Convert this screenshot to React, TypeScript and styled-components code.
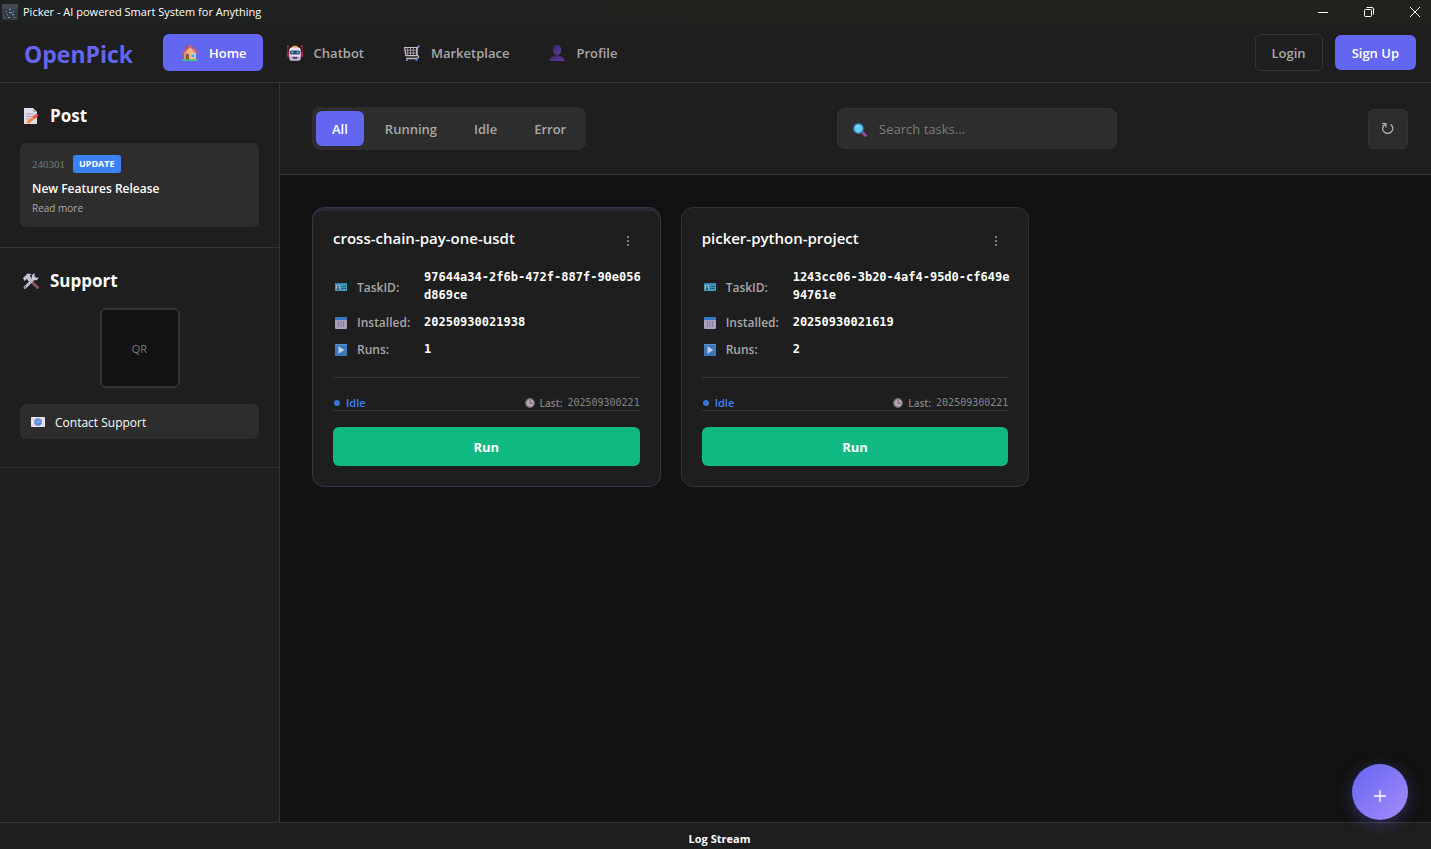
import React from "react";
import styled, { createGlobalStyle, css } from "styled-components";

const color = {
  page: "#121212",
  panel: "#1e1e1e",
  raised: "#2d2d2d",
  line: "#333333",
  accent: "#6366f1",
  text: "#ffffff",
  muted: "#a8a8a8",
  faint: "#7c7c7c",
  blue: "#3b82f6",
  green: "#10b981",
};

const GlobalStyle = createGlobalStyle`
  *, *::before, *::after { box-sizing: border-box; }
  body {
    margin: 0;
    background: ${color.page};
    color: ${color.text};
    font-family: "Open Sans", "Noto Sans", sans-serif;
    font-size: 13px;
    line-height: 19px;
  }
  button, input { font: inherit; color: inherit; margin: 0; }
  button { border: 0; background: none; cursor: pointer; }
  h1, h2, h3, h4, p, dl, dd, dt { margin: 0; }
`;

const Shell = styled.div`
  display: flex;
  flex-direction: column;
  min-height: 100vh;
`;

/* ---------- window title bar ---------- */

const TitleBar = styled.div`
  display: flex;
  align-items: center;
  height: 23px;
  padding-left: 2px;
  gap: 5px;
  background: linear-gradient(90deg, #202221, #202221 30%, #23211b 60%);
  font-size: 11px;
`;

const TitleText = styled.span`
  flex: 1;
`;

const WindowControls = styled.div`
  display: flex;
`;

const WindowButton = styled.button`
  display: flex;
  align-items: center;
  justify-content: center;
  width: 46px;
  height: 22px;
  padding: 0;
  &:last-child { width: 32px; margin-left: 7px; }
`;

/* ---------- header ---------- */

const Header = styled.header`
  display: flex;
  align-items: center;
  height: 60px;
  padding: 0 15px 0 24px;
  background: ${color.panel};
  border-bottom: 1px solid ${color.line};
`;

const Brand = styled.h1`
  width: 139px;
  padding-top: 2px;
  font-size: 23px;
  line-height: 32px;
  font-weight: 700;
  color: ${color.accent};
`;

const Nav = styled.nav`
  display: flex;
  flex: 1;
  gap: 5px;
`;

const NavItem = styled.a<{ $active?: boolean }>`
  display: flex;
  align-items: center;
  gap: 8px;
  height: 37px;
  padding: 0 16px;
  border-radius: 6px;
  line-height: 21px;
  font-weight: 600;
  text-decoration: none;
  color: ${(p) => (p.$active ? color.text : color.muted)};
  background: ${(p) => (p.$active ? color.accent : "transparent")};
`;

const NavLabel = styled.span`
  padding-top: 2px;
`;

const IconBox = styled.span<{ $w?: number }>`
  display: inline-flex;
  justify-content: center;
  align-items: center;
  flex: none;
  width: ${(p) => p.$w ?? 22}px;
`;

const AuthButtons = styled.div`
  display: flex;
  align-items: center;
  gap: 12px;
`;

const AuthButton = styled.button<{ $primary?: boolean }>`
  padding: 9px 16px 7px;
  border-radius: 6px;
  font-weight: 600;
  ${(p) =>
    p.$primary
      ? css`
          padding: 9px 17px 7px;
          background: ${color.accent};
          color: ${color.text};
        `
      : css`
          border: 1px solid ${color.line};
          color: ${color.muted};
        `}
`;

/* ---------- body ---------- */

const Body = styled.div`
  display: flex;
  flex: 1;
`;

const Sidebar = styled.aside`
  flex: none;
  width: 280px;
  background: ${color.panel};
  border-right: 1px solid ${color.line};
`;

const SideSection = styled.section`
  padding: 20px;
  border-bottom: 1px solid ${color.line};
`;

const SideHeading = styled.h2`
  display: flex;
  align-items: center;
  gap: 8px;
  margin-bottom: 14px;
  font-size: 17px;
  line-height: 26px;
  font-weight: 700;
`;

const PostCard = styled.article`
  height: 84px;
  padding: 12px;
  border-radius: 6px;
  background: ${color.raised};
`;

const PostMeta = styled.div`
  display: flex;
  align-items: center;
  gap: 8px;
  margin-bottom: 6px;
`;

const PostDate = styled.time`
  font-family: "Liberation Serif", serif;
  font-size: 11px;
  line-height: 18px;
  color: ${color.faint};
`;

const Badge = styled.span`
  padding: 0 6px;
  border-radius: 3px;
  background: ${color.blue};
  font-size: 9px;
  line-height: 18px;
  font-weight: 700;
`;

const PostTitle = styled.h3`
  font-size: 12px;
  line-height: 20px;
  font-weight: 600;
`;

const PostLink = styled.a`
  display: block;
  font-size: 10px;
  line-height: 19px;
  color: ${color.muted};
  text-decoration: none;
`;

const QrBox = styled.div`
  display: flex;
  align-items: center;
  justify-content: center;
  width: 80px;
  height: 80px;
  margin: 0 auto 16px;
  border: 2px solid ${color.line};
  border-radius: 6px;
  background: ${color.page};
  font-size: 11px;
  color: ${color.faint};
`;

const ContactButton = styled.button`
  display: flex;
  align-items: center;
  gap: 7px;
  width: 100%;
  height: 35px;
  margin-bottom: 8px;
  padding: 1px 8px 0;
  border-radius: 6px;
  background: ${color.raised};
  font-size: 12px;
`;

/* ---------- main ---------- */

const Main = styled.main`
  flex: 1;
  min-width: 0;
`;

const Toolbar = styled.div`
  display: flex;
  align-items: center;
  justify-content: space-between;
  padding: 24px 23px 24px 32px;
  background: ${color.panel};
  border-bottom: 1px solid ${color.line};
`;

const FilterGroup = styled.div`
  display: flex;
  gap: 5px;
  padding: 4px;
  border-radius: 8px;
  background: ${color.raised};
`;

const FilterButton = styled.button<{ $active?: boolean }>`
  padding: 9px 16px 7px;
  border-radius: 6px;
  font-weight: 600;
  color: ${(p) => (p.$active ? color.text : color.muted)};
  background: ${(p) => (p.$active ? color.accent : "transparent")};
`;

const SearchField = styled.label`
  display: flex;
  align-items: center;
  gap: 9px;
  width: 280px;
  height: 41px;
  padding: 2px 12px 0;
  border: 1px solid ${color.line};
  border-radius: 8px;
  background: ${color.raised};
`;

const SearchInput = styled.input`
  flex: 1;
  min-width: 0;
  padding: 0;
  border: 0;
  outline: 0;
  background: transparent;
  &::placeholder { color: ${color.faint}; opacity: 1; }
`;

const RefreshButton = styled.button`
  display: flex;
  align-items: center;
  justify-content: center;
  width: 40px;
  height: 40px;
  padding: 0;
  border: 1px solid ${color.line};
  border-radius: 6px;
  background: ${color.raised};
`;

const TaskGrid = styled.div`
  display: grid;
  grid-template-columns: repeat(auto-fill, minmax(320px, 1fr));
  gap: 20px;
  padding: 32px 33px 32px 32px;
`;

const TaskCard = styled.article<{ $highlighted?: boolean }>`
  padding: 20px;
  border: 1px solid ${(p) => (p.$highlighted ? "#37344a" : color.line)};
  border-radius: 12px;
  background: ${color.panel};
  ${(p) => p.$highlighted && css`box-shadow: inset 0 3px 0 #2b2938;`}
`;

const TaskHead = styled.div`
  display: flex;
  align-items: center;
  justify-content: space-between;
  height: 24px;
  margin-bottom: 16px;
  padding-right: 7px;
`;

const TaskName = styled.h3`
  padding-bottom: 4px;
  font-size: 15px;
  line-height: 20px;
  font-weight: 600;
`;

const MenuButton = styled.button`
  display: flex;
  padding: 1px 4px 0;
`;

const Details = styled.dl`
  padding-bottom: 11px;
  border-bottom: 1px solid ${color.line};
`;

const DetailRow = styled.div`
  display: flex;
  align-items: center;
  margin-bottom: 8px;
`;

const DetailLabel = styled.dt`
  display: flex;
  align-items: center;
  flex: none;
  gap: 8px;
  width: 91px;
  padding-top: 2px;
  font-size: 12px;
  line-height: 17px;
  font-weight: 600;
  color: ${color.muted};
`;

const DetailValue = styled.dd`
  flex: none;
  width: calc(30ch + 2px);
  font-family: "DejaVu Sans Mono", monospace;
  font-size: 12px;
  line-height: 18px;
  font-weight: 700;
  word-break: break-all;
`;

const StatusRow = styled.div`
  display: flex;
  align-items: center;
  justify-content: space-between;
  height: 33px;
  margin-bottom: 16px;
  padding-top: 17px;
  border-bottom: 1px solid ${color.line};
`;

const Status = styled.span`
  display: flex;
  align-items: center;
  gap: 6px;
  padding-left: 1px;
  font-size: 11px;
  line-height: 16px;
  font-weight: 600;
  color: ${color.blue};
  &::before {
    content: "";
    width: 6px;
    height: 6px;
    border-radius: 50%;
    background: #3973d6;
  }
`;

const LastRun = styled.span`
  display: flex;
  align-items: center;
  gap: 5px;
  font-size: 10px;
  line-height: 16px;
  color: #858585;
  font-weight: 600;
  time {
    font-family: "DejaVu Sans Mono", monospace;
    font-weight: 400;
  }
`;

const RunButton = styled.button`
  width: 100%;
  height: 39px;
  padding: 1px 0 0;
  border-radius: 6px;
  background: ${color.green};
  font-weight: 700;
`;

const AddButton = styled.button`
  position: fixed;
  right: 23px;
  bottom: 29px;
  display: flex;
  align-items: center;
  justify-content: center;
  width: 56px;
  height: 56px;
  padding: 7px 0 0;
  border-radius: 50%;
  background: linear-gradient(135deg, #6366f1, #a78bfa);
  box-shadow: 0 4px 16px rgba(99, 102, 241, 0.35);
`;

const LogBar = styled.footer`
  height: 27px;
  padding: 6px 0 0 8px;
  border-top: 1px solid ${color.line};
  background: ${color.panel};
  text-align: center;
  font-size: 11px;
  font-weight: 700;
`;

/* ---------- icons ---------- */

const AppIcon = () => (
  <svg width="16" height="16" viewBox="0 0 16 16" aria-hidden="true">
    <rect width="16" height="16" fill="#343c47" />
    <path d="M0 0h16v5H0z" fill="#434a56" />
    <g fill="#79a6ad">
      <rect x="7" y="5" width="2" height="1" /><rect x="4" y="7" width="1" height="1" />
      <rect x="7" y="8" width="3" height="1" /><rect x="11" y="7" width="1" height="1" />
      <rect x="5" y="10" width="1" height="1" /><rect x="10" y="10" width="2" height="1" />
      <rect x="2" y="13" width="1" height="1" /><rect x="6" y="13" width="2" height="1" />
      <rect x="12" y="13" width="1" height="1" />
    </g>
  </svg>
);

const MinimizeIcon = () => (
  <svg width="10" height="10" viewBox="0 0 10 10" aria-hidden="true"><path d="M0 5.5h10" stroke="#fff" /></svg>
);
const RestoreIcon = () => (
  <svg width="10" height="10" viewBox="0 0 10 10" fill="none" stroke="#fff" aria-hidden="true">
    <rect x=".5" y="2.5" width="7" height="7" rx="1" />
    <path d="M2.5 .5H8a1.5 1.5 0 0 1 1.500 1.500V7.500" />
  </svg>
);
const CloseIcon = () => (
  <svg width="10" height="10" viewBox="0 0 10 10" aria-hidden="true"><path d="M0 0l10 10M10 0L0 10" stroke="#fff" /></svg>
);

const HomeIcon = () => (
  <svg width="16" height="16" viewBox="0 0 16 16" aria-hidden="true">
    <path d="M3 1h3v5H3z" fill="#9c5a50" />
    <path d="M2 8l6-6 6 6v7H2z" fill="#f0b183" />
    <path d="M2 9l3-3v9H2z" fill="#dc9270" />
    <path d="M.7 8.500L8.500 1l7 7" fill="none" stroke="#e8604a" strokeWidth="1.600" strokeLinecap="round" />
    <rect x="4" y="9" width="3" height="6" fill="#8e5545" />
    <rect x="9" y="9" width="4" height="3.500" fill="#4fa9e8" stroke="#fce0c4" strokeWidth=".6" />
    <path d="M0 15.200h16" stroke="#36c979" strokeWidth="1.600" />
  </svg>
);

const RobotIcon = () => (
  <svg width="16" height="16" viewBox="0 0 16 16" aria-hidden="true">
    <path d="M.8 1v7M15.200 1v7" stroke="#a91f51" strokeWidth=".9" />
    <circle cx=".9" cy="1.200" r=".9" fill="#d32b5f" /><circle cx="15.100" cy="1.200" r=".9" fill="#d32b5f" />
    <rect x="0" y="7" width="2.500" height="5" rx="1" fill="#b02350" />
    <rect x="13.500" y="7" width="2.500" height="5" rx="1" fill="#b02350" />
    <path d="M5 2.500Q5 .8 6.500.8h3Q11 .8 11 2.500z" fill="#f2a51c" />
    <path d="M5.500 2.200h5q3.200 0 3.200 3.200v7.100H2.300V5.400q0-3.200 3.200-3.200z" fill="#ece2f4" />
    <path d="M2.300 11h11.400v2.500q0 2.300-2.300 2.300H4.600q-2.300 0-2.300-2.300z" fill="#cbb5dc" />
    <rect x="3" y="5.500" width="10" height="4" rx="1.500" fill="#34466a" />
    <rect x="4.300" y="6.500" width="2.200" height="2" rx=".8" fill="#55b9f4" />
    <rect x="9.500" y="6.500" width="2.200" height="2" rx=".8" fill="#55b9f4" />
    <rect x="5.500" y="12" width="5" height="1.700" rx=".4" fill="#4c4058" />
  </svg>
);

const CartIcon = () => (
  <svg width="16" height="16" viewBox="0 0 16 16" fill="none" aria-hidden="true">
    <path d="M.6 2.500h12.400v8.200H1.800z" stroke="#c9c3ce" strokeWidth="1.200" />
    <path d="M3.700 2.500v8M6.500 2.500v8M9.300 2.500v8M.8 5.200h12M1 8h12" stroke="#a9a3ae" strokeWidth=".9" />
    <path d="M15 1l-2.200 2.500v6.700q2 .5 1.800 2-.3 1.300-2 1.300H2" stroke="#bdb6c4" strokeWidth="1.300" />
    <path d="M13.700 1.700l2-1" stroke="#3484dc" strokeWidth="1.500" />
    <circle cx="3" cy="15" r="1.100" fill="#438cd8" /><circle cx="12.500" cy="15" r="1.100" fill="#438cd8" />
  </svg>
);

const PersonIcon = () => (
  <svg width="16" height="16" viewBox="0 0 16 16" aria-hidden="true">
    <defs>
      <linearGradient id="person" x1="0" y1="0" x2="1" y2="1">
        <stop offset="0" stopColor="#3b2365" /><stop offset="1" stopColor="#643b9d" />
      </linearGradient>
    </defs>
    <path d="M8 0c2.800 0 4.200 2 4.200 5S10.500 10 8 10 3.800 8 3.800 5 5.200 0 8 0z" fill="url(#person)" />
    <path d="M.5 16c0-3.500 3-5 7.500-5s7.500 1.500 7.500 5z" fill="url(#person)" />
    <path d="M6.500 9h3v3h-3z" fill="#452873" />
  </svg>
);

const MemoIcon = () => (
  <svg width="16" height="16" viewBox="0 0 16 16" aria-hidden="true">
    <path d="M1 0h9l4 4v12H1z" fill="#e4dbea" />
    <path d="M10 0l4 4h-4z" fill="#b5a6c0" />
    <path d="M3 6h8M3 8.500h7M3 11h5" stroke="#a999b5" strokeWidth=".9" />
    <path d="M4.500 14.800L12 8.700" stroke="#f98b3c" strokeWidth="3" />
    <path d="M11.700 9l1.800-1.500" stroke="#f0504f" strokeWidth="3.200" strokeLinecap="round" />
    <path d="M3 16l.6-2.600 2 2z" fill="#f5cda0" />
  </svg>
);

const ToolsIcon = () => (
  <svg width="16" height="16" viewBox="0 0 16 16" fill="none" aria-hidden="true">
    <path d="M7 7l7.500 7.500" stroke="#8c536f" strokeWidth="3" strokeLinecap="round" />
    <path d="M2 14.500L11.500 5" stroke="#c6bdcd" strokeWidth="2.600" strokeLinecap="round" />
    <path d="M12 .5a3.400 3.400 0 1 0 3.500 3.700L13 5l-1.700-1.800z" fill="#cec5d5" />
    <path d="M0 5l4.500-4.500 4.200.5-2 2 2.300 2.700-3 3L3.700 6 1.500 8z" fill="#c9bfd0" />
    <circle cx="2.300" cy="14" r=".7" fill="#3c3542" />
  </svg>
);

const MailIcon = () => (
  <svg width="14" height="10" viewBox="0 0 14 10" aria-hidden="true">
    <rect width="14" height="10" fill="#ebe2f2" />
    <path d="M0 0l5 5-5 5M14 0L9 5l5 5" fill="none" stroke="#c8b8d8" strokeWidth=".7" />
    <circle cx="7" cy="5" r="3.700" fill="#3a7cd4" />
    <circle cx="7" cy="5" r="1.300" fill="none" stroke="#a6caf3" strokeWidth=".7" />
    <path d="M8.300 3.600v2q.6 1 1.300-.4A2.600 2.600 0 1 0 8 7.500" fill="none" stroke="#a6caf3" strokeWidth=".5" />
  </svg>
);

const SearchIcon = () => (
  <svg width="14" height="14" viewBox="0 0 14 14" aria-hidden="true">
    <path d="M9.500 9.500l3 3" stroke="#955191" strokeWidth="2.800" strokeLinecap="round" />
    <circle cx="5.500" cy="5.500" r="4.800" fill="#60d0f2" stroke="#3370b4" strokeWidth="1.200" />
    <path d="M3 4.800Q4 2.800 6 2.800" fill="none" stroke="#9ceafe" strokeWidth="1" />
  </svg>
);

const RefreshIcon = () => (
  <svg width="13" height="13" viewBox="0 0 13 13" fill="none" stroke="#b6b6b6" strokeWidth="1.200" aria-hidden="true">
    <path d="M1 1.600h4v4" />
    <path d="M4.700 1.900C1 4 .8 8.200 3.400 10.200c2.600 2 6.600 1.200 7.900-1.800.9-2.200.3-4.600-1.800-6.200" />
  </svg>
);

const DotsIcon = () => (
  <svg width="3" height="12" viewBox="0 0 3 12" fill="#7d7d7d" aria-hidden="true">
    <rect x="1" y="1" width="2" height="2" /><rect x="1" y="5" width="2" height="2" /><rect x="1" y="9" width="2" height="2" />
  </svg>
);

const IdIcon = () => (
  <svg width="12" height="12" viewBox="0 0 12 12" aria-hidden="true">
    <rect y="2" width="12" height="8" fill="#439cbb" />
    <path d="M0 2h12v1.500H0z" fill="#3583b2" />
    <rect x="1" y="4" width="4" height="5" fill="#8ebfc9" />
    <circle cx="3" cy="5.700" r="1" fill="#514150" /><path d="M1.500 9q0-2 1.500-2t1.500 2z" fill="#354870" />
    <path d="M6.500 5.500H11M6.500 7.500H11" stroke="#205b79" />
  </svg>
);

const CalendarIcon = () => (
  <svg width="12" height="12" viewBox="0 0 12 12" aria-hidden="true">
    <rect width="12" height="12" rx="1" fill="#aaa0bb" />
    <path d="M0 0h12v3H0z" fill="#3975c5" />
    <path d="M3.500 4v6M6 4v6M8.500 4v6" stroke="#77718c" strokeWidth=".8" />
  </svg>
);

const PlayIcon = () => (
  <svg width="12" height="12" viewBox="0 0 12 12" aria-hidden="true">
    <rect width="12" height="12" fill="#3d78bd" />
    <path d="M0 0h12v1H0z" fill="#5592cf" />
    <path d="M3.500 2.300L9.300 6l-5.800 3.700z" fill="#c8cddc" />
  </svg>
);

const ClockIcon = () => (
  <svg width="10" height="10" viewBox="0 0 10 10" fill="none" aria-hidden="true">
    <circle cx="5" cy="5" r="4.300" fill="#b1acb5" stroke="#716b76" strokeWidth="1.200" />
    <path d="M5 2v3.300" stroke="#a23f54" /><path d="M5 5.200h2.200" stroke="#5f5964" />
  </svg>
);

const PlusIcon = () => (
  <svg width="12" height="12" viewBox="0 0 12 12" aria-hidden="true"><path d="M0 6h12M6 0v12" stroke="#fff" strokeWidth="1.300" /></svg>
);

/* ---------- data ---------- */

const navItems = [
  { label: "Home", Icon: HomeIcon },
  { label: "Chatbot", Icon: RobotIcon },
  { label: "Marketplace", Icon: CartIcon },
  { label: "Profile", Icon: PersonIcon },
];

const filters = ["All", "Running", "Idle", "Error"];

interface Task {
  name: string;
  id: string;
  installed: string;
  runs: number;
  last: string;
}

const tasks: Task[] = [
  { name: "cross-chain-pay-one-usdt", id: "97644a34-2f6b-472f-887f-90e056d869ce", installed: "20250930021938", runs: 1, last: "202509300221" },
  { name: "picker-python-project", id: "1243cc06-3b20-4af4-95d0-cf649e94761e", installed: "20250930021619", runs: 2, last: "202509300221" },
];

function Detail({ icon, label, value }: { icon: React.ReactNode; label: string; value: React.ReactNode }) {
  return (
    <DetailRow>
      <DetailLabel><IconBox $w={16}>{icon}</IconBox>{label}</DetailLabel>
      <DetailValue>{value}</DetailValue>
    </DetailRow>
  );
}

function TaskItem({ task, highlighted }: { task: Task; highlighted?: boolean }) {
  return (
    <TaskCard $highlighted={highlighted}>
      <TaskHead>
        <TaskName>{task.name}</TaskName>
        <MenuButton aria-label={`Options for ${task.name}`}><DotsIcon /></MenuButton>
      </TaskHead>
      <Details>
        <Detail icon={<IdIcon />} label="TaskID:" value={task.id} />
        <Detail icon={<CalendarIcon />} label="Installed:" value={task.installed} />
        <Detail icon={<PlayIcon />} label="Runs:" value={task.runs} />
      </Details>
      <StatusRow>
        <Status>Idle</Status>
        <LastRun><ClockIcon /><span>Last:</span><time>{task.last}</time></LastRun>
      </StatusRow>
      <RunButton>Run</RunButton>
    </TaskCard>
  );
}

export default function App() {
  return (
    <Shell>
      <GlobalStyle />
      <TitleBar>
        <AppIcon />
        <TitleText>Picker - AI powered Smart System for Anything</TitleText>
        <WindowControls>
          <WindowButton aria-label="Minimize"><MinimizeIcon /></WindowButton>
          <WindowButton aria-label="Restore"><RestoreIcon /></WindowButton>
          <WindowButton aria-label="Close"><CloseIcon /></WindowButton>
        </WindowControls>
      </TitleBar>
      <Header>
        <Brand>OpenPick</Brand>
        <Nav>
          {navItems.map(({ label, Icon }, i) => (
            <NavItem key={label} href="#" $active={i === 0}>
              <IconBox><Icon /></IconBox><NavLabel>{label}</NavLabel>
            </NavItem>
          ))}
        </Nav>
        <AuthButtons>
          <AuthButton>Login</AuthButton>
          <AuthButton $primary>Sign Up</AuthButton>
        </AuthButtons>
      </Header>
      <Body>
        <Sidebar>
          <SideSection>
            <SideHeading><IconBox><MemoIcon /></IconBox>Post</SideHeading>
            <PostCard>
              <PostMeta><PostDate>240301</PostDate><Badge>UPDATE</Badge></PostMeta>
              <PostTitle>New Features Release</PostTitle>
              <PostLink href="#">Read more</PostLink>
            </PostCard>
          </SideSection>
          <SideSection>
            <SideHeading><IconBox><ToolsIcon /></IconBox>Support</SideHeading>
            <QrBox>QR</QrBox>
            <ContactButton><IconBox $w={20}><MailIcon /></IconBox>Contact Support</ContactButton>
          </SideSection>
        </Sidebar>
        <Main>
          <Toolbar>
            <FilterGroup>
              {filters.map((f, i) => <FilterButton key={f} $active={i === 0}>{f}</FilterButton>)}
            </FilterGroup>
            <SearchField>
              <IconBox $w={20}><SearchIcon /></IconBox>
              <SearchInput type="text" placeholder="Search tasks..." aria-label="Search tasks" />
            </SearchField>
            <RefreshButton aria-label="Refresh"><RefreshIcon /></RefreshButton>
          </Toolbar>
          <TaskGrid>
            {tasks.map((t, i) => <TaskItem key={t.id} task={t} highlighted={i === 0} />)}
          </TaskGrid>
        </Main>
      </Body>
      <LogBar>Log Stream</LogBar>
      <AddButton aria-label="Add task"><PlusIcon /></AddButton>
    </Shell>
  );
}
